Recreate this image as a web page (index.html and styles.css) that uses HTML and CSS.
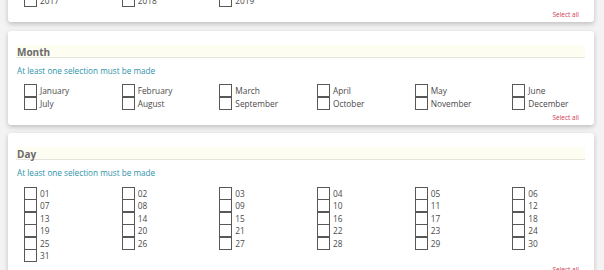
FILE: index.html
```html
<!doctype html>
<html lang="en">
  <head>
    <meta charset="UTF-8" />
    <title>Date filter</title>
    <link rel="stylesheet" href="styles.css">
  </head>
  <body>
    <div class="filters">
      <div class="card card-first">
        <div class="card-head">Year</div>
        <div class="hint">At least one selection must be made</div>
        <div class="options">
          <label class="option"><input type="checkbox" /> 2011</label>
          <label class="option"><input type="checkbox" /> 2012</label>
          <label class="option"><input type="checkbox" /> 2013</label>
          <label class="option"><input type="checkbox" /> 2014</label>
          <label class="option"><input type="checkbox" /> 2015</label>
          <label class="option"><input type="checkbox" /> 2016</label>
          <label class="option"><input type="checkbox" /> 2017</label>
          <label class="option"><input type="checkbox" /> 2018</label>
          <label class="option"><input type="checkbox" /> 2019</label>
        </div>
        <div class="select-all"><a href="#">Select all</a></div>
      </div>

      <div class="card">
        <div class="card-head">Month</div>
        <div class="hint">At least one selection must be made</div>
        <div class="options">
          <label class="option"><input type="checkbox" /> January</label>
          <label class="option"><input type="checkbox" /> February</label>
          <label class="option"><input type="checkbox" /> March</label>
          <label class="option"><input type="checkbox" /> April</label>
          <label class="option"><input type="checkbox" /> May</label>
          <label class="option"><input type="checkbox" /> June</label>
          <label class="option"><input type="checkbox" /> July</label>
          <label class="option"><input type="checkbox" /> August</label>
          <label class="option"><input type="checkbox" /> September</label>
          <label class="option"><input type="checkbox" /> October</label>
          <label class="option"><input type="checkbox" /> November</label>
          <label class="option"><input type="checkbox" /> December</label>
        </div>
        <div class="select-all"><a href="#">Select all</a></div>
      </div>

      <div class="card">
        <div class="card-head">Day</div>
        <div class="hint">At least one selection must be made</div>
        <div class="options" id="days">
          <!-- Filled dynamically -->
        </div>
        <div class="select-all"><a href="#">Select all</a></div>
      </div>
    </div>

    <script>
      const days = document.getElementById("days");
      for (let d = 1; d <= 31; d++) {
        const num = d < 10 ? "0" + d : "" + d;
        days.innerHTML += `<label class="option"><input type="checkbox" /> ${num}</label>`;
      }
    </script>
  </body>
</html>
```

FILE: styles.css
```css
body {
  margin: 0;
  font-family: "Open Sans", Arial, sans-serif;
  background-color: #f3f3f3;
  overflow: hidden;
}

.filters {
  padding: 0 10px 0 8px;
}

.card {
  background-color: white;
  border-radius: 3px;
  box-shadow: 0 2px 5px rgba(0, 0, 0, 0.22);
  padding: 14px 0 3px;
  margin-bottom: 8.5px;
}

.card-first {
  margin-top: -72px;
}

.card-head {
  margin: 0 9px 0 8px;
  padding-left: 1px;
  height: 12px;
  line-height: 14px;
  background-color: #fdfdf1;
  border-bottom: 1px solid #e4e4dc;
  font-size: 10px;
  font-weight: bold;
  color: #6a6a6a;
}

.hint {
  margin: 8px 0 9px;
  padding-left: 9px;
  font-size: 8.2px;
  line-height: 10px;
  color: #2e93aa;
}

.options {
  display: grid;
  grid-template-columns: repeat(6, 1fr);
}

.option {
  display: flex;
  align-items: center;
  height: 12.5px;
  padding-left: 16px;
  font-size: 8.3px;
  color: #4a4a4a;
  white-space: nowrap;
}

.option input {
  appearance: none;
  -webkit-appearance: none;
  box-sizing: border-box;
  width: 13px;
  height: 13px;
  margin: 0 3px 0 0;
  border: 1px solid #585858;
  background-color: white;
  flex-shrink: 0;
}

.select-all {
  margin-top: 4px;
  padding-right: 15px;
  text-align: right;
  font-size: 6.5px;
  line-height: 8px;
}

.select-all a {
  color: #d0374f;
  text-decoration: none;
}
```
